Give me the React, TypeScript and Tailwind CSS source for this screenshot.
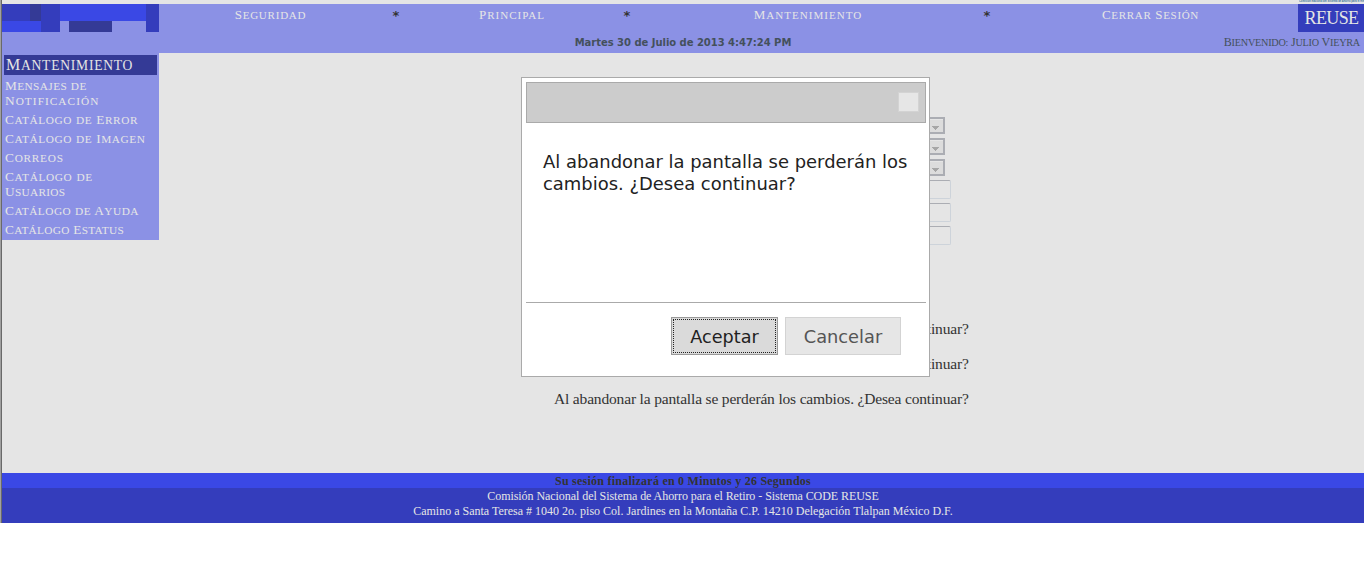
import type { ReactNode } from 'react';

const serif = "font-['Liberation_Serif',serif]";
const sans = "font-['DejaVu_Sans',sans-serif]";

const warning = 'Al abandonar la pantalla se perderán los cambios. ¿Desea continuar?';

type Line = { text: string; tracking: string };

const sections: Line[][] = [
  [
    { text: 'Mensajes de', tracking: 'tracking-[0.4px]' },
    { text: 'Notificación', tracking: 'tracking-[1.05px]' },
  ],
  [{ text: 'Catálogo de Error', tracking: 'tracking-[0.6px]' }],
  [{ text: 'Catálogo de Imagen', tracking: 'tracking-[0.6px]' }],
  [{ text: 'Correos', tracking: 'tracking-[0.75px]' }],
  [
    { text: 'Catálogo de', tracking: 'tracking-[0.65px]' },
    { text: 'Usuarios', tracking: 'tracking-[0.3px]' },
  ],
  [{ text: 'Catálogo de Ayuda', tracking: 'tracking-[0.5px]' }],
  [{ text: 'Catálogo Estatus', tracking: 'tracking-[0.3px]' }],
];

/* Capitals stay at full size; lower-case runs become capitals at 85%. */
function SmallCaps({ text }: { text: string }) {
  return (
    <>
      {text.split(/([A-Z]|\s+)/).map((part, i) =>
        /^([A-Z]|\s+)$/.test(part) || part === '' ? (
          part
        ) : (
          <span key={i} className="text-[0.85em] leading-none uppercase">
            {part}
          </span>
        ),
      )}
    </>
  );
}

function NavLink({ children, className }: { children: ReactNode; className: string }) {
  return (
    <a className={`text-center text-[13px] leading-[22px] whitespace-nowrap text-[#e5e5e5] ${className}`}>
      {children}
    </a>
  );
}

function Star() {
  return <span className={`${sans} pl-px text-center text-[13px] leading-[24px] font-bold text-[#333]`}>*</span>;
}

function Logo() {
  return (
    <svg width="157" height="28" viewBox="0 0 157 28" shapeRendering="crispEdges">
      <path fill="#343dbc" d="M0 0h28v17H0zM39 0h19v28H39zM144 0h13v28h-13z" />
      <path fill="#343a96" d="M28 0h11v17H28zM67 17h43v11H67z" />
      <path fill="#3a48e5" d="M58 0h86v17H58zM0 17h39v11H0z" />
    </svg>
  );
}

function Header() {
  return (
    <header className="flex h-[49px] flex-col bg-[#8b91e5]">
      <div className="flex h-7">
        <Logo />
        <nav className="grid flex-1 grid-cols-[223px_27px_205px_25px_337px_21px_301px]">
          <NavLink className="tracking-[0.75px]">
            <SmallCaps text="Seguridad" />
          </NavLink>
          <Star />
          <NavLink className="pl-px tracking-[1px]">
            <SmallCaps text="Principal" />
          </NavLink>
          <Star />
          <NavLink className="pl-px tracking-[1px]">
            <SmallCaps text="Mantenimiento" />
          </NavLink>
          <Star />
          <NavLink className="pl-[6px] tracking-[0.65px]">
            <SmallCaps text="Cerrar Sesión" />
          </NavLink>
        </nav>
        <div className="w-[66px] bg-[#343dbc] pl-px text-center text-[18px] leading-[29px] tracking-[-0.6px] text-[#e5e5e5]">
          REUSE
        </div>
      </div>
      <div className="grid h-[21px] grid-cols-3 pr-1 leading-[21px] text-[#44505c]">
        <span />
        <span className={`${sans} pl-[4px] text-center text-[10px] font-bold tracking-[-0.03px] whitespace-nowrap`}>
          Martes 30 de Julio de 2013 4:47:24 PM
        </span>
        <span className="text-right text-[12px] tracking-[-0.22px] whitespace-nowrap">
          <SmallCaps text="Bienvenido: Julio Vieyra" />
        </span>
      </div>
    </header>
  );
}

function Sidebar() {
  return (
    <aside className="h-[187px] w-[157px] bg-[#8b91e5] px-0.5 pt-0.5 text-[#e5e5e5]">
      <h2 className="mb-[3px] h-5 bg-[#343a96] pl-0.5 text-[16px] leading-[20px] tracking-[0.75px]">
        <SmallCaps text="Mantenimiento" />
      </h2>
      <ul className="flex flex-col gap-1 pl-[1px] text-[13.3px] leading-[15px]">
        {sections.map((lines) => (
          <li key={lines.map((l) => l.text).join(' ')}>
            {lines.map((l) => (
              <div key={l.text} className={`h-[15px] whitespace-nowrap ${l.tracking}`}>
                <SmallCaps text={l.text} />
              </div>
            ))}
          </li>
        ))}
      </ul>
    </aside>
  );
}

function Select() {
  return (
    <div className="flex h-[17px] w-[264px] justify-end border-2 border-[#abadb3] bg-[#e5e5e5]">
      <div className="mt-px flex w-[15px] items-center justify-center bg-[#dcdcdc] pt-1">
        <svg width="7" height="4" viewBox="0 0 7 4" shapeRendering="crispEdges">
          <path fill="#a6a6a6" d="M0 0h7v1H0zM1 1h5v1H1zM2 2h3v1H2zM3 3h1v1H3z" />
        </svg>
      </div>
    </div>
  );
}

function Field() {
  return <div className="h-[19px] w-[270px] rounded-[2px] border border-[#cdd3da] border-t-[#abadb3]" />;
}

function Dialog() {
  return (
    <div
      role="dialog"
      className={`${sans} absolute top-[77px] left-[521px] flex h-[300px] w-[409px] flex-col border border-[#aaa] bg-white p-1 text-[17.6px] text-[#222]`}
    >
      <div className="flex h-[41px] w-[400px] shrink-0 items-center justify-end border border-[#aaa] bg-[#ccc] pr-[6px]">
        <div className="mb-px h-[20px] w-[21px] border border-[#d3d3d3] bg-[#e6e6e6]" />
      </div>
      <div className="flex-1 pt-[28px] pl-[17px] text-[17.95px] leading-[22px] whitespace-nowrap">
        <p>Al abandonar la pantalla se perderán los</p>
        <p>cambios. ¿Desea continuar?</p>
      </div>
      <div className="flex h-[70px] w-[400px] justify-end gap-[7px] border-t border-[#aaa] pt-[14px] pr-[25px]">
        <button className="h-[38px] w-[107px] border border-[#999] bg-[#dadada] p-px text-[#212121]">
          <span className="flex h-full items-center justify-center border border-dotted border-[#212121] pt-[2px]">
            Aceptar
          </span>
        </button>
        <button className="h-[38px] w-[116px] border border-[#d3d3d3] bg-[#e6e6e6] pt-[2px] text-[17.8px] text-[#555]">
          Cancelar
        </button>
      </div>
    </div>
  );
}

export default function App() {
  return (
    <div className={`${serif} relative h-[581px] w-[1365px] overflow-hidden bg-white pr-px`}>
      <div className="h-[523px] border-l border-[#a0a0a0]">
        <div className="flex h-full flex-col border-l border-[#696969] bg-[#e5e5e5]">
          <div className="flex h-1 justify-end overflow-hidden">
            <div className="h-[3px] w-[65px] overflow-hidden font-['Liberation_Sans',sans-serif] text-[2.6px] leading-[3px] font-bold whitespace-nowrap text-[#3d7396]">
              Comisión Nacional del Sistema de Ahorro para el Retiro
            </div>
          </div>
          <Header />
          <div className="flex flex-1">
            <Sidebar />
            <main className="flex-1 pt-16 pl-[395px] text-[#333]">
              <div className="flex flex-col gap-1 pl-[127px]">
                <Select />
                <Select />
                <Select />
                <div className="flex flex-col gap-1">
                  <Field />
                  <Field />
                  <Field />
                </div>
              </div>
              <div className="flex flex-col pt-[66px] text-[15.5px] leading-[35px] tracking-[-0.17px] whitespace-nowrap">
                <p>{warning}</p>
                <p>{warning}</p>
                <p>{warning}</p>
              </div>
            </main>
          </div>
          <footer className="h-[50px] bg-[#343dbc] text-center text-[12px] leading-[15px] text-[#e5e5e5]">
            <div className="h-[15px] bg-[#3a48e5] pt-px font-bold tracking-[0.24px] text-[#333]">
              Su sesión finalizará en 0 Minutos y 26 Segundos
            </div>
            <p className="pt-px tracking-[-0.06px]">
              Comisión Nacional del Sistema de Ahorro para el Retiro - Sistema CODE REUSE
            </p>
            <p>Camino a Santa Teresa # 1040 2o. piso Col. Jardines en la Montaña C.P. 14210 Delegación Tlalpan México D.F.</p>
          </footer>
        </div>
      </div>
      <Dialog />
    </div>
  );
}
